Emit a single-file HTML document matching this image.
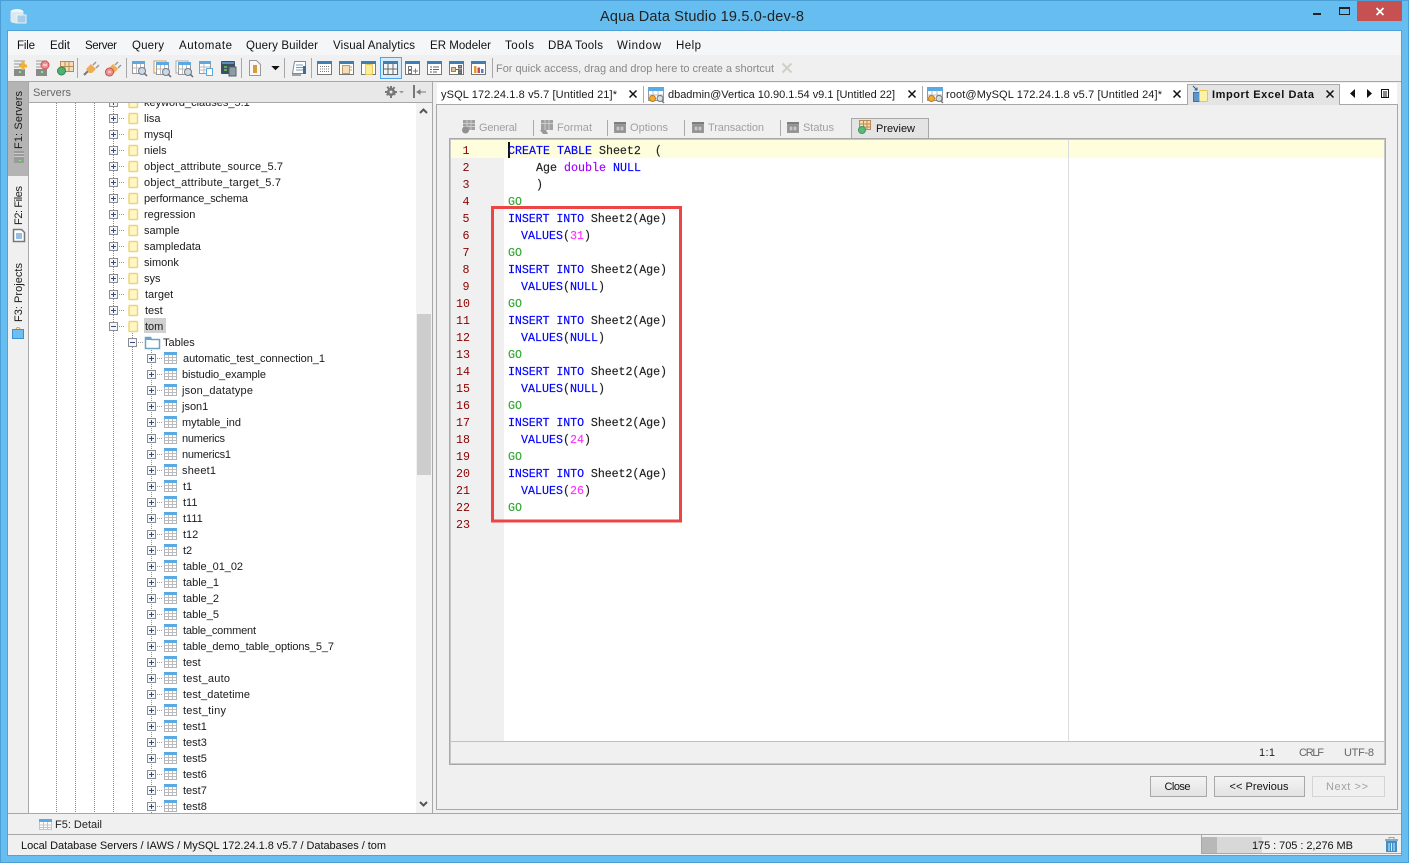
<!DOCTYPE html>
<html><head><meta charset="utf-8"><title>Aqua Data Studio</title>
<style>
html,body{margin:0;padding:0;background:#66bdf0;overflow:hidden}
svg{display:block}
text{font-family:"Liberation Sans",sans-serif;font-size:11px;fill:#1a1a1a;white-space:pre}
.m{font-size:11.5px;fill:#111}
.c{font-family:"Liberation Mono",monospace;font-size:11.67px;fill:#222;stroke:#222;stroke-width:.15}
.k{fill:#0000ff;stroke:#0000ff}
.p{fill:#a000ff;stroke:#a000ff}
.n{fill:#ff30ff;stroke:#ff30ff}
.g{fill:#33a833;stroke:#33a833}
.l{font-family:"Liberation Mono",monospace;font-size:11.67px;fill:#8b0000;text-anchor:middle}
.b{text-anchor:middle}
</style></head><body>
<svg xmlns="http://www.w3.org/2000/svg" width="1409" height="863" viewBox="0 0 1409 863">
<defs>
<g id="exp"><rect x="109.5" y="-3.5" width="8" height="8" fill="#f6f6f6" stroke="#8c8c8c"/><path d="M111 .5h5M113.5 -2v5" stroke="#34488c"/><path d="M119 .5h1M121 .5h1M123 .5h1" stroke="#999"/></g>
<g id="col"><rect x="109.5" y="-3.5" width="8" height="8" fill="#f6f6f6" stroke="#8c8c8c"/><path d="M111 .5h5" stroke="#34488c"/><path d="M119 .5h1M121 .5h1M123 .5h1" stroke="#999"/></g>
<g id="db"><rect x="129" y="-4.5" width="8.500" height="10" rx="1" fill="#fdf8c6" stroke="#f2d374" stroke-width="1.500"/></g>
<g id="tb"><rect x="164.5" y="-5.5" width="12" height="11" fill="#fff" stroke="#b4b4b4"/><rect x="164" y="-6" width="13" height="3" fill="#5aa9e2"/><path d="M168.5 -3v8M172.5 -3v8M165 -.5h11M165 2.500h11" stroke="#bcbcbc"/></g>
<g id="tbh"><rect x=".5" y=".5" width="14" height="13" fill="#fff" stroke="#777"/><rect x="0" y="0" width="15" height="3" fill="#3e7fb8"/></g>
<g id="plug"><path d="M1 15l5-5" stroke="#777" stroke-width="2"/><path d="M3 9l5-5 5 5-4 4h-3z" fill="#f0ac50"/><path d="M10 5l3-3M13 8l3-3" stroke="#999" stroke-width="1.500"/></g>
<g id="srv"><path d="M1 1h11M1 4h11M1 7h11" stroke="#999"/><rect x="1" y="9" width="11" height="7" fill="#8a8a8a"/><rect x="6" y="11" width="2" height="2" fill="#6f6"/></g>
<g id="sq"><rect x=".5" y=".5" width="12" height="12" fill="#fff" stroke="#999"/><rect y="0" width="13" height="3" fill="#5aa9e2"/><path d="M4.500 3v9M8.500 3v9M1 7h11" stroke="#bbb"/><circle cx="10" cy="10" r="3.500" fill="#c8dce8" stroke="#778"/><path d="M12 12l3 3" stroke="#667" stroke-width="1.500"/></g>
<g id="cog"><rect x="1" y="2" width="12" height="11" fill="#9a9a9a"/><rect x="3" y="6" width="8" height="5" fill="#c6c6c6" stroke="#888"/><path d="M7 6v5" stroke="#888"/><rect x="1" y="2" width="12" height="2" fill="#7d7d7d"/></g>
<g id="qi"><rect x=".5" y=".5" width="15" height="13" fill="#fff" stroke="#999"/><rect y="0" width="16" height="4" fill="#5aa9e2"/><path d="M5 4v9M10 4v9M1 8h14" stroke="#bbb"/><circle cx="4.500" cy="11.500" r="3" fill="#f0ac40" stroke="#c07a10"/><circle cx="12" cy="11.500" r="3" fill="#d4e0e6" stroke="#777"/><path d="M14 14l2 2" stroke="#777" stroke-width="1.500"/></g>
<clipPath id="tc"><rect x="29" y="103" width="387" height="710"/></clipPath>
<linearGradient id="bt" x1="0" y1="0" x2="0" y2="1"><stop offset="0" stop-color="#f4f4f4"/><stop offset="1" stop-color="#e2e2e2"/></linearGradient>
</defs>

<!-- window frame -->
<rect width="1409" height="863" fill="#66bdf0"/>
<path d="M.5 863V.5H1408.500V863" fill="none" stroke="#4b9fd6"/>
<path d="M0 862.500H1409" stroke="#4b9fd6"/>
<rect x="7" y="30" width="1395" height="826" fill="#4fa3da"/>
<rect x="8" y="31" width="1393" height="824" fill="#f0f0f0"/>

<!-- title -->
<g transform="translate(10,7)"><ellipse cx="7" cy="5" rx="6.500" ry="3" fill="#f4f8fb"/><rect x=".5" y="5" width="13" height="9" fill="#dce9f3"/><ellipse cx="7" cy="14" rx="6.500" ry="2.500" fill="#dce9f3"/><rect x="7" y="8" width="9" height="8" fill="#a8cbe6" stroke="#e8f2fa"/></g>
<text x="600" y="21" style="font-size:14.500px;fill:#222" textLength="204">Aqua Data Studio 19.5.0-dev-8</text>
<rect x="1313" y="13" width="8" height="2" fill="#222"/>
<rect x="1339.500" y="7.500" width="10" height="7" fill="none" stroke="#222"/><rect x="1339" y="7" width="11" height="2" fill="#222"/>
<rect x="1357" y="1" width="45" height="20" fill="#c75050"/>
<path d="M1376.500 8l7 7M1383.500 8l-7 7" stroke="#fff" stroke-width="1.800"/>

<!-- menu -->
<rect x="8" y="31" width="1393" height="24" fill="#f5f6f7"/>
<text class="m" x="17" y="49" textLength="18">File</text>
<text class="m" x="50" y="49" textLength="20">Edit</text>
<text class="m" x="85" y="49" textLength="32">Server</text>
<text class="m" x="132" y="49" textLength="32">Query</text>
<text class="m" x="179" y="49" textLength="53">Automate</text>
<text class="m" x="246" y="49" textLength="72">Query Builder</text>
<text class="m" x="333" y="49" textLength="82">Visual Analytics</text>
<text class="m" x="430" y="49" textLength="61">ER Modeler</text>
<text class="m" x="505" y="49" textLength="29">Tools</text>
<text class="m" x="548" y="49" textLength="55">DBA Tools</text>
<text class="m" x="617" y="49" textLength="44">Window</text>
<text class="m" x="676" y="49" textLength="25">Help</text>

<!-- toolbar -->
<rect x="8" y="55" width="1393" height="26" fill="#f0f0f0"/>
<rect x="8" y="81" width="1393" height="1" fill="#a8a8a8"/>
<g transform="translate(13,60)"><use href="#srv"/><path d="M6 6h8M10 1v9" stroke="#f0b030" stroke-width="3"/></g>
<g transform="translate(35,60)"><use href="#srv"/><circle cx="10" cy="5" r="4" fill="#f09090" stroke="#c85050"/><path d="M8 5h4" stroke="#fff"/></g>
<g transform="translate(57,61)"><rect x="3.500" y=".5" width="13" height="10" fill="#f3ddb8" stroke="#b98b50"/><path d="M8 1v9M12 1v9M4 5.500h12" stroke="#b98b50"/><circle cx="4.500" cy="10" r="4" fill="#4fb070" stroke="#2c8a50"/></g>
<rect x="77" y="58" width="1" height="20" fill="#a8a8a8"/>
<g transform="translate(83,60)"><use href="#plug"/></g>
<g transform="translate(105,60)"><use href="#plug"/><circle cx="4.500" cy="12" r="4" fill="#f09090" stroke="#c85050"/><path d="M3 12h3" stroke="#fff"/></g>
<rect x="126" y="58" width="1" height="20" fill="#a8a8a8"/>
<g transform="translate(132,61)"><use href="#sq"/></g>
<g transform="translate(154,61)"><rect x="0" y="0" width="12" height="12" fill="#fff" stroke="#c8a060"/><g transform="translate(2,1)"><use href="#sq"/></g></g>
<g transform="translate(176,61)"><rect x="0" y="0" width="12" height="12" fill="#fff" stroke="#aaa"/><g transform="translate(2,1)"><use href="#sq"/></g></g>
<g transform="translate(199,61)"><rect x=".5" y=".5" width="11" height="12" fill="#fff" stroke="#999"/><rect y="0" width="12" height="3" fill="#5aa9e2"/><path d="M1 6h10M1 9h10M5 3v9" stroke="#bbb"/><rect x="7.500" y="7.500" width="6" height="7" fill="#fff" stroke="#5aa9e2"/></g>
<g transform="translate(221,61)"><rect width="14" height="13" rx="1" fill="#3d5060"/><rect x="1" y="1" width="12" height="2" fill="#5a8fc0"/><path d="M3 6h3M3 9h3" stroke="#5fd05f" stroke-width="1.500"/><rect x="8" y="6" width="7" height="9" fill="#8e9aa5" stroke="#55606a"/></g>
<rect x="241" y="58" width="1" height="20" fill="#a8a8a8"/>
<g transform="translate(249,60)"><path d="M.5 .5h7l4 4v11h-11z" fill="#f8f8f8" stroke="#999"/><rect x="4" y="5" width="4" height="8" fill="#d99a3a"/></g>
<path d="M272.500 66.500h6l-3 3z" fill="#111" stroke="#111"/>
<rect x="284" y="58" width="1" height="20" fill="#a8a8a8"/>
<g transform="translate(291,60)"><path d="M3.500 1.500h11v12h-13z" fill="#fff" stroke="#888"/><path d="M5 5h7M5 7.500h7M5 10h7" stroke="#6a9cc8"/><path d="M1 15h9" stroke="#888" stroke-width="1.500"/><rect x="12" y="6" width="3" height="8" fill="#4a6a8a"/></g>
<rect x="311" y="58" width="1" height="20" fill="#a8a8a8"/>
<g transform="translate(317,61)"><use href="#tbh"/><path d="M3 5.500h9M3 8h9M3 10.500h9" stroke="#777" stroke-dasharray="1 1"/></g>
<g transform="translate(339,61)"><use href="#tbh"/><rect x="3.500" y="4.500" width="7" height="8" fill="#f2ddbc" stroke="#c89a60"/><path d="M11 6h2M11 9h2" stroke="#c89a60"/></g>
<g transform="translate(361,61)"><use href="#tbh"/><rect x="4.500" y="3.500" width="7" height="10" rx="1" fill="#fbee9a" stroke="#ecc94a"/></g>
<rect x="380.500" y="57.500" width="21" height="21" fill="#d6ebfa" stroke="#4da3ec"/>
<g transform="translate(383,61)"><rect x=".5" y=".5" width="14" height="13" fill="#f2f6f9" stroke="#666"/><rect width="15" height="3" fill="#3e7fb8"/><path d="M5 3v10M10 3v10M1 8h13" stroke="#666"/></g>
<g transform="translate(405,61)"><use href="#tbh"/><rect x="3.500" y="5.500" width="3" height="3" fill="none" stroke="#777"/><rect x="3.500" y="9.500" width="3" height="3" fill="none" stroke="#777"/><path d="M8 10h5M10.500 7.500v5" stroke="#777"/></g>
<g transform="translate(427,61)"><use href="#tbh"/><path d="M3 6h2M6 6h6M3 8.500h2M6 8.500h6M3 11h2M6 11h4" stroke="#666"/></g>
<g transform="translate(449,61)"><use href="#tbh"/><rect x="2.500" y="6.500" width="4" height="4" fill="#e6c090" stroke="#a77d4a"/><path d="M7 8.500h2" stroke="#666"/><rect x="9.500" y="4.500" width="3" height="2" fill="#aaa" stroke="#666"/><rect x="9.500" y="8" width="3" height="2" fill="#aaa" stroke="#666"/><rect x="9.500" y="11" width="3" height="1.500" fill="#aaa" stroke="#666"/></g>
<g transform="translate(471,61)"><use href="#tbh"/><rect x="3" y="5" width="2.500" height="7" fill="#d89a3a"/><rect x="6.500" y="6.500" width="2.500" height="5.500" fill="#d04a4a"/><rect x="10" y="8" width="2.500" height="4" fill="#4a80c8"/></g>
<rect x="492" y="58" width="1" height="20" fill="#a8a8a8"/>
<text x="496" y="72" style="fill:#888" textLength="278">For quick access, drag and drop here to create a shortcut</text>
<path d="M782.500 63.500l9 9M791.500 63.500l-9 9" stroke="#cfcfc8" stroke-width="2"/>

<!-- left tab strip -->
<rect x="8" y="82" width="20" height="731" fill="#f0f0f0"/>
<rect x="8" y="82" width="20" height="94" fill="#b4b4b4"/>
<rect x="28" y="82" width="1" height="731" fill="#a8a8a8"/>
<text transform="translate(22,149) rotate(-90)" textLength="58">F1: Servers</text>
<g transform="translate(14,151)"><rect width="10" height="12" fill="#9a9a9a"/><path d="M0 2.500h10M0 5.500h10" stroke="#ccc"/><rect x="5" y="9" width="2" height="1" fill="#6f6"/></g>
<text transform="translate(22,225) rotate(-90)" textLength="39">F2: Files</text>
<g transform="translate(13,229)"><path d="M.5 .5h8l3 3v9H.5z" fill="#fff" stroke="#777" stroke-width="1.500"/><path d="M3 5h6M3 7h6M3 9h6" stroke="#2f7cc8"/></g>
<text transform="translate(22,322) rotate(-90)" textLength="59">F3: Projects</text>
<g transform="translate(12,327)"><path d="M4 2.500a2 2 0 0 1 4 0" fill="none" stroke="#e0a030"/><rect x=".5" y="2.500" width="11" height="9" fill="#70bdf0" stroke="#3a90d0"/></g>

<!-- servers header -->
<rect x="29" y="82" width="403" height="20" fill="#e8e8e8"/>
<rect x="29" y="102" width="403" height="1" fill="#a8a8a8"/>
<text x="33" y="96" style="fill:#666" textLength="38">Servers</text>
<g fill="#777"><circle cx="391" cy="92" r="4"/><path d="M385 91h12v2h-12zM390 86h2v12h-2zM386.500 87.500l1.400-1.400 8 8-1.400 1.400zM394 86.500l1.400 1.400-8 8-1.400-1.400z"/><circle cx="391" cy="92" r="1.500" fill="#e8e8e8"/><path d="M399 91h5l-2.500 2.500z" fill="#999"/></g>
<rect x="413" y="85" width="2" height="13" fill="#777"/><path d="M417 92h9M417 92l3-2v4z" stroke="#777" fill="#777"/>

<!-- tree -->
<rect x="29" y="103" width="387" height="710" fill="#fff"/>
<g clip-path="url(#tc)">
<g stroke="#8a8a8a" stroke-dasharray="1 1">
<path d="M56.500 103V813M75.500 103V813M94.500 103V813M113.500 103V813M132.500 333V813M151.500 350V813"/>
</g>
<use href="#exp" y="102"/><use href="#db" y="102"/><text x="144" y="106">keyword_clauses_5.1</text>
<use href="#exp" y="118"/><use href="#db" y="118"/><text x="144" y="122">lisa</text>
<use href="#exp" y="134"/><use href="#db" y="134"/><text x="144" y="138">mysql</text>
<use href="#exp" y="150"/><use href="#db" y="150"/><text x="144" y="154">niels</text>
<use href="#exp" y="166"/><use href="#db" y="166"/><text x="144" y="170" textLength="139">object_attribute_source_5.7</text>
<use href="#exp" y="182"/><use href="#db" y="182"/><text x="144" y="186" textLength="137">object_attribute_target_5.7</text>
<use href="#exp" y="198"/><use href="#db" y="198"/><text x="144" y="202" textLength="104">performance_schema</text>
<use href="#exp" y="214"/><use href="#db" y="214"/><text x="144" y="218">regression</text>
<use href="#exp" y="230"/><use href="#db" y="230"/><text x="144" y="234">sample</text>
<use href="#exp" y="246"/><use href="#db" y="246"/><text x="144" y="250">sampledata</text>
<use href="#exp" y="262"/><use href="#db" y="262"/><text x="144" y="266">simonk</text>
<use href="#exp" y="278"/><use href="#db" y="278"/><text x="144" y="282">sys</text>
<use href="#exp" y="294"/><use href="#db" y="294"/><text x="145" y="298">target</text>
<use href="#exp" y="310"/><use href="#db" y="310"/><text x="145" y="314">test</text>
<use href="#col" y="326"/><use href="#db" y="326"/><rect x="144" y="318" width="22" height="15" fill="#d0d0d0"/><text x="145" y="330">tom</text>
<use href="#col" y="342" x="19"/><g transform="translate(145,336)"><path d="M.5 1.500h5l1 2h8v9H.5z" fill="#fff" stroke="#6ba4c8" stroke-width="1.500"/><rect x="1" y="1" width="5" height="3" fill="#6ba4c8"/></g><text x="163" y="346">Tables</text>
<use href="#exp" y="358" x="38"/><use href="#tb" y="358"/><text x="183" y="362" textLength="142">automatic_test_connection_1</text>
<use href="#exp" y="374" x="38"/><use href="#tb" y="374"/><text x="182" y="378" textLength="84">bistudio_example</text>
<use href="#exp" y="390" x="38"/><use href="#tb" y="390"/><text x="182" y="394" textLength="71">json_datatype</text>
<use href="#exp" y="406" x="38"/><use href="#tb" y="406"/><text x="182" y="410">json1</text>
<use href="#exp" y="422" x="38"/><use href="#tb" y="422"/><text x="182" y="426" textLength="59">mytable_ind</text>
<use href="#exp" y="438" x="38"/><use href="#tb" y="438"/><text x="182" y="442" textLength="43">numerics</text>
<use href="#exp" y="454" x="38"/><use href="#tb" y="454"/><text x="182" y="458" textLength="49">numerics1</text>
<use href="#exp" y="470" x="38"/><use href="#tb" y="470"/><text x="182" y="474" textLength="34">sheet1</text>
<use href="#exp" y="486" x="38"/><use href="#tb" y="486"/><text x="183" y="490">t1</text>
<use href="#exp" y="502" x="38"/><use href="#tb" y="502"/><text x="183" y="506">t11</text>
<use href="#exp" y="518" x="38"/><use href="#tb" y="518"/><text x="183" y="522">t111</text>
<use href="#exp" y="534" x="38"/><use href="#tb" y="534"/><text x="183" y="538">t12</text>
<use href="#exp" y="550" x="38"/><use href="#tb" y="550"/><text x="183" y="554">t2</text>
<use href="#exp" y="566" x="38"/><use href="#tb" y="566"/><text x="183" y="570" textLength="60">table_01_02</text>
<use href="#exp" y="582" x="38"/><use href="#tb" y="582"/><text x="183" y="586" textLength="36">table_1</text>
<use href="#exp" y="598" x="38"/><use href="#tb" y="598"/><text x="183" y="602" textLength="36">table_2</text>
<use href="#exp" y="614" x="38"/><use href="#tb" y="614"/><text x="183" y="618" textLength="36">table_5</text>
<use href="#exp" y="630" x="38"/><use href="#tb" y="630"/><text x="183" y="634" textLength="73">table_comment</text>
<use href="#exp" y="646" x="38"/><use href="#tb" y="646"/><text x="183" y="650" textLength="151">table_demo_table_options_5_7</text>
<use href="#exp" y="662" x="38"/><use href="#tb" y="662"/><text x="183" y="666">test</text>
<use href="#exp" y="678" x="38"/><use href="#tb" y="678"/><text x="183" y="682" textLength="47">test_auto</text>
<use href="#exp" y="694" x="38"/><use href="#tb" y="694"/><text x="183" y="698" textLength="67">test_datetime</text>
<use href="#exp" y="710" x="38"/><use href="#tb" y="710"/><text x="183" y="714" textLength="43">test_tiny</text>
<use href="#exp" y="726" x="38"/><use href="#tb" y="726"/><text x="183" y="730">test1</text>
<use href="#exp" y="742" x="38"/><use href="#tb" y="742"/><text x="183" y="746">test3</text>
<use href="#exp" y="758" x="38"/><use href="#tb" y="758"/><text x="183" y="762">test5</text>
<use href="#exp" y="774" x="38"/><use href="#tb" y="774"/><text x="183" y="778">test6</text>
<use href="#exp" y="790" x="38"/><use href="#tb" y="790"/><text x="183" y="794">test7</text>
<use href="#exp" y="806" x="38"/><use href="#tb" y="806"/><text x="183" y="810">test8</text>
</g>

<!-- scrollbar -->
<rect x="416" y="103" width="16" height="710" fill="#f2f2f2"/>
<path d="M420 113l3.500-3.500 3.500 3.500" fill="none" stroke="#555" stroke-width="2"/>
<path d="M420 802l3.500 3.500 3.500-3.500" fill="none" stroke="#555" stroke-width="2"/>
<rect x="417" y="314" width="14" height="161" fill="#cdcdcd"/>
<rect x="432" y="82" width="1" height="731" fill="#a8a8a8"/>

<!-- right panel tabs -->
<rect x="433" y="82" width="968" height="731" fill="#f0f0f0"/>
<rect x="437" y="83" width="960" height="22" fill="#fff"/>
<rect x="436" y="104" width="961" height="1" fill="#a8a8a8"/>
<text x="441" y="98" textLength="176">ySQL 172.24.1.8 v5.7 [Untitled 21]*</text>
<path d="M629.500 90.500l7 7M636.500 90.500l-7 7" stroke="#111" stroke-width="1.500"/>
<rect x="643" y="86" width="1" height="17" fill="#aaa"/>
<g transform="translate(648,87)"><use href="#qi"/></g>
<text x="668" y="98" textLength="227">dbadmin@Vertica 10.90.1.54 v9.1 [Untitled 22]</text>
<path d="M908.500 90.500l7 7M915.500 90.500l-7 7" stroke="#111" stroke-width="1.500"/>
<rect x="922" y="86" width="1" height="17" fill="#aaa"/>
<g transform="translate(927,87)"><use href="#qi"/></g>
<text x="946" y="98" textLength="216">root@MySQL 172.24.1.8 v5.7 [Untitled 24]*</text>
<path d="M1173.500 90.500l7 7M1180.500 90.500l-7 7" stroke="#111" stroke-width="1.500"/>
<path d="M1187.500 105V84.500H1339.500V105" fill="#e4e4e4" stroke="#a8a8a8"/>
<g transform="translate(1192,85)"><path d="M1 1l4 4M2.500 5H5V2.500" stroke="#1c5f9c" fill="none"/><rect x="1.500" y="7.500" width="8" height="9" fill="#5b96cc" stroke="#3b74a8"/><rect x="7.500" y="5.500" width="8" height="11" rx="1" fill="#fcf3a8" stroke="#e8c64a"/></g>
<text x="1212" y="98" style="font-weight:bold;fill:#111" textLength="102">Import Excel Data</text>
<path d="M1326.500 90.500l7 7M1333.500 90.500l-7 7" stroke="#111" stroke-width="1.500"/>
<path d="M1355 89v9l-5-4.500zM1367 89v9l5-4.500z" fill="#111"/>
<rect x="1381.500" y="89.500" width="7" height="8" fill="none" stroke="#111"/><path d="M1383 92h4M1383 94h4M1383 96h4" stroke="#111"/>
<rect x="436" y="104" width="1" height="706" fill="#a8a8a8"/>
<rect x="1397" y="104" width="1" height="706" fill="#a8a8a8"/>
<rect x="436" y="809" width="962" height="1" fill="#a8a8a8"/>

<!-- sub tabs -->
<g transform="translate(462,120)"><rect x="1" width="12" height="10" fill="#a0a0a0"/><path d="M5 0v10M9 0v10M1 3.500h12M1 6.500h12" stroke="#ccc"/><circle cx="3.500" cy="10" r="3.500" fill="#919191"/></g>
<text x="479" y="131" style="fill:#a0a0a0" textLength="38">General</text>
<rect x="533" y="120" width="1" height="16" fill="#aaa"/>
<g transform="translate(540,120)"><rect x="1" width="12" height="10" fill="#a0a0a0"/><path d="M5 0v10M9 0v10M1 3.500h12" stroke="#ccc"/><path d="M0 10h6l2 4h-5z" fill="#999"/></g>
<text x="557" y="131" style="fill:#a0a0a0" textLength="35">Format</text>
<rect x="607" y="120" width="1" height="16" fill="#aaa"/>
<g transform="translate(613,120)"><use href="#cog"/></g>
<text x="630" y="131" style="fill:#a0a0a0" textLength="38">Options</text>
<rect x="684" y="120" width="1" height="16" fill="#aaa"/>
<g transform="translate(691,120)"><use href="#cog"/></g>
<text x="708" y="131" style="fill:#a0a0a0" textLength="56">Transaction</text>
<rect x="780" y="120" width="1" height="16" fill="#aaa"/>
<g transform="translate(786,120)"><use href="#cog"/></g>
<text x="803" y="131" style="fill:#a0a0a0" textLength="31">Status</text>
<path d="M851.500 139V118.500H928.500V139" fill="#e4e4e4" stroke="#a8a8a8"/>
<g transform="translate(858,120)"><rect x="1.500" y=".5" width="11" height="9" fill="#f3ddb8" stroke="#b98b50"/><path d="M5.500 1v8M9 1v8M2 4h10M2 7h10" stroke="#b98b50"/><circle cx="4" cy="10" r="3.500" fill="#5cb97a" stroke="#3b9a5c"/></g>
<text x="876" y="132" style="fill:#111" textLength="39">Preview</text>

<!-- editor -->
<rect x="449.500" y="138.500" width="936" height="626" fill="#f0f0f0" stroke="#a8a8a8"/>
<rect x="450.500" y="139.500" width="934" height="624" fill="#f0f0f0" stroke="#c8c8c8"/>
<rect x="451" y="140" width="933" height="601" fill="#fff"/>
<rect x="451" y="158" width="53" height="583" fill="#f0f0f0"/>
<rect x="451" y="140" width="933" height="18" fill="#fefedd"/>
<rect x="1068" y="140" width="1" height="601" fill="#dcdcdc"/>
<rect x="451" y="741" width="933" height="1" fill="#c0c0c0"/>
<rect x="508" y="142" width="2" height="16" fill="#111"/>
<text class="l" x="466" y="154">1</text><text class="l" x="466" y="171">2</text><text class="l" x="466" y="188">3</text><text class="l" x="466" y="205">4</text><text class="l" x="466" y="222">5</text><text class="l" x="466" y="239">6</text><text class="l" x="466" y="256">7</text><text class="l" x="466" y="273">8</text><text class="l" x="466" y="290">9</text><text class="l" x="463" y="307">10</text><text class="l" x="463" y="324">11</text><text class="l" x="463" y="341">12</text><text class="l" x="463" y="358">13</text><text class="l" x="463" y="375">14</text><text class="l" x="463" y="392">15</text><text class="l" x="463" y="409">16</text><text class="l" x="463" y="426">17</text><text class="l" x="463" y="443">18</text><text class="l" x="463" y="460">19</text><text class="l" x="463" y="477">20</text><text class="l" x="463" y="494">21</text><text class="l" x="463" y="511">22</text><text class="l" x="463" y="528">23</text>

<text class="c" x="508" y="154"><tspan class="k">CREATE TABLE</tspan> Sheet2  (</text>
<text class="c" x="536" y="171">Age <tspan class="p">double</tspan> <tspan class="k">NULL</tspan></text>
<text class="c" x="536" y="188">)</text>
<text class="c g" x="508" y="205">GO</text>
<text class="c" x="508" y="222" textLength="159"><tspan class="k">INSERT INTO</tspan> Sheet2(Age)</text>
<text class="c" x="521" y="239"><tspan class="k">VALUES</tspan>(<tspan class="n">31</tspan>)</text>
<text class="c g" x="508" y="256">GO</text>
<text class="c" x="508" y="273" textLength="159"><tspan class="k">INSERT INTO</tspan> Sheet2(Age)</text>
<text class="c" x="521" y="290"><tspan class="k">VALUES</tspan>(<tspan class="k">NULL</tspan>)</text>
<text class="c g" x="508" y="307">GO</text>
<text class="c" x="508" y="324" textLength="159"><tspan class="k">INSERT INTO</tspan> Sheet2(Age)</text>
<text class="c" x="521" y="341"><tspan class="k">VALUES</tspan>(<tspan class="k">NULL</tspan>)</text>
<text class="c g" x="508" y="358">GO</text>
<text class="c" x="508" y="375" textLength="159"><tspan class="k">INSERT INTO</tspan> Sheet2(Age)</text>
<text class="c" x="521" y="392"><tspan class="k">VALUES</tspan>(<tspan class="k">NULL</tspan>)</text>
<text class="c g" x="508" y="409">GO</text>
<text class="c" x="508" y="426" textLength="159"><tspan class="k">INSERT INTO</tspan> Sheet2(Age)</text>
<text class="c" x="521" y="443"><tspan class="k">VALUES</tspan>(<tspan class="n">24</tspan>)</text>
<text class="c g" x="508" y="460">GO</text>
<text class="c" x="508" y="477" textLength="159"><tspan class="k">INSERT INTO</tspan> Sheet2(Age)</text>
<text class="c" x="521" y="494"><tspan class="k">VALUES</tspan>(<tspan class="n">26</tspan>)</text>
<text class="c g" x="508" y="511">GO</text>
<rect x="492.500" y="207.500" width="188" height="313.500" fill="none" stroke="#ee4444" stroke-width="3"/>

<text x="1259" y="756" style="fill:#222" textLength="16">1:1</text>
<text x="1299" y="756" style="fill:#666" textLength="25">CRLF</text>
<text x="1344" y="756" style="fill:#666" textLength="30">UTF-8</text>

<!-- buttons -->
<rect x="1150.500" y="776.500" width="56" height="20" fill="url(#bt)" stroke="#a8a8a8"/>
<text x="1164.500" y="790" style="fill:#111" textLength="26">Close</text>
<rect x="1214.500" y="776.500" width="90" height="20" fill="url(#bt)" stroke="#a8a8a8"/>
<text x="1229.500" y="790" style="fill:#111" textLength="59">&lt;&lt; Previous</text>
<rect x="1312.500" y="776.500" width="72" height="20" fill="#f0f0f0" stroke="#d4d4d4"/>
<text x="1326" y="790" style="fill:#a0a0a0" textLength="42">Next &gt;&gt;</text>

<!-- bottom bars -->
<rect x="8" y="813" width="1393" height="1" fill="#a8a8a8"/>
<g transform="translate(39,819)"><rect x=".5" y=".5" width="12" height="10" fill="#fff" stroke="#c4c4c4"/><rect width="13" height="3" fill="#5aa9e2"/><path d="M4.500 3v8M8.500 3v8M1 6h11M1 8.500h11" stroke="#c4c4c4"/></g>
<text x="55" y="828" style="fill:#222" textLength="47">F5: Detail</text>
<rect x="8" y="834" width="1393" height="1" fill="#a8a8a8"/>
<text x="21" y="849" style="fill:#111" textLength="365">Local Database Servers / IAWS / MySQL 172.24.1.8 v5.7 / Databases / tom</text>
<rect x="1201" y="835" width="200" height="19" fill="#f0f0f0"/>
<rect x="1201" y="835" width="1" height="19" fill="#a8a8a8"/>
<rect x="1202" y="837" width="15" height="16" fill="#b8b8b8"/>
<rect x="1217" y="837" width="45" height="16" fill="#d8d8d8"/>
<rect x="1202" y="853" width="199" height="1" fill="#a8a8a8"/>
<text x="1252" y="849" style="fill:#111" textLength="101">175 : 705 : 2,276 MB</text>
<g transform="translate(1385,837)"><path d="M4 2.500V.5h5v2" fill="none" stroke="#8fa9bd"/><rect x="0" y="2" width="13" height="2" fill="#8fa9bd"/><path d="M1 4h11v11H1z" fill="#3f8fc8"/><path d="M4 6v8M6.500 6v8M9 6v8" stroke="#d7ebf8"/></g>
</svg>
</body></html>
